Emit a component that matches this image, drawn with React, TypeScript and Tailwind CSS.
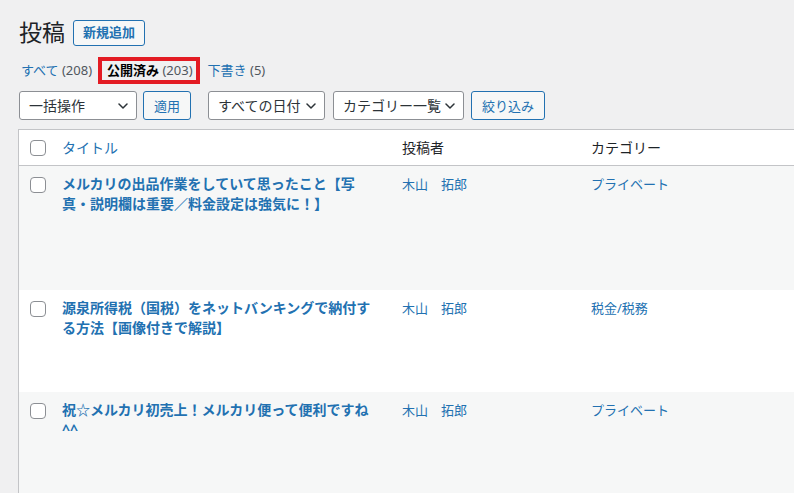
const font = "font-['Noto_Sans','Noto_Sans_CJK_JP',sans-serif]";

function Chevron() {
  return (
    <svg width="10" height="6" viewBox="0 0 10 6" fill="none" className="shrink-0">
      <path d="M1 1l4 4 4-4" stroke="#2c3338" strokeWidth="1.5" strokeLinecap="round" strokeLinejoin="round" />
    </svg>
  );
}

function Select({ label, width }: { label: string; width: string }) {
  return (
    <div
      className={`${width} h-[29px] flex items-center justify-between pl-[9px] pr-[8px] bg-white border border-[#8c8f94] rounded-[3px] text-[14px] text-[#2c3338]`}
    >
      <span className="leading-[20px]">{label}</span>
      <Chevron />
    </div>
  );
}

function Button({ label }: { label: string }) {
  return (
    <div className="h-[29px] flex items-center px-[10px] bg-[#f6f7f7] border border-[#2271b1] rounded-[3px] text-[13px] text-[#2271b1] leading-[20px]">
      {label}
    </div>
  );
}

function Checkbox() {
  return <div className="w-4 h-4 bg-white border border-[#8c8f94] rounded-[4px]" />;
}

const posts = [
  {
    title: "メルカリの出品作業をしていて思ったこと【写真・説明欄は重要／料金設定は強気に！】",
    category: "プライベート",
    height: "h-[124px]",
    bg: "bg-[#f6f7f7]",
  },
  {
    title: "源泉所得税（国税）をネットバンキングで納付する方法【画像付きで解説】",
    category: "税金/税務",
    height: "h-[102px]",
    bg: "bg-white",
  },
  {
    title: "祝☆メルカリ初売上！メルカリ便って便利ですね^^",
    category: "プライベート",
    height: "h-[120px]",
    bg: "bg-[#f6f7f7]",
  },
];

export default function App() {
  return (
    <div className={`w-[794px] h-[493px] overflow-hidden bg-[#f0f0f1] ${font} text-[#1d2327]`}>
      <div className="pl-[18px] pt-[18px]">
        {/* 見出し */}
        <div className="flex items-center gap-[8px]">
          <h1 className="text-[23px] leading-[29px] font-normal pl-[1px]">投稿</h1>
          <div className="h-[26px] flex items-center px-[9px] bg-[#f6f7f7] border border-[#2271b1] rounded-[3px] text-[13px] font-semibold text-[#2271b1]">
            新規追加
          </div>
        </div>

        {/* ステータス */}
        <div className="mt-[10px] h-[27px] flex items-center text-[13px] leading-[21px] pl-[3px]">
          <span>
            <span className="text-[#2271b1]">すべて</span>
            <span className="text-[#50575e]"> (208)</span>
          </span>
          <span className="ml-[6px] h-[27px] border-[4px] border-[#e31b23] pl-[5px] pr-[3px] flex items-center">
            <span className="font-bold text-black">公開済み</span>
            <span className="text-[#50575e]">&nbsp;(203)</span>
          </span>
          <span className="ml-[8px]">
            <span className="text-[#2271b1]">下書き</span>
            <span className="text-[#50575e]"> (5)</span>
          </span>
        </div>

        {/* 操作 */}
        <div className="mt-[7px] pl-[1px] flex items-center">
          <Select label="一括操作" width="w-[118px]" />
          <div className="ml-[6px]">
            <Button label="適用" />
          </div>
          <div className="ml-[17px]">
            <Select label="すべての日付" width="w-[117px]" />
          </div>
          <div className="ml-[8px]">
            <Select label="カテゴリー一覧" width="w-[131px]" />
          </div>
          <div className="ml-[7px]">
            <Button label="絞り込み" />
          </div>
        </div>

        {/* 一覧 */}
        <div className="mt-[9px] w-[1100px] bg-white border-l border-t border-[#c3c4c7]">
          <div className="h-[36px] flex items-center border-b border-[#c3c4c7] text-[14px] leading-[21px]">
            <div className="w-[33px] pl-[11px]">
              <Checkbox />
            </div>
            <div className="w-[340px] px-[10px] text-[#2271b1]">タイトル</div>
            <div className="w-[189px] pl-[10px]">投稿者</div>
            <div className="pl-[10px]">カテゴリー</div>
          </div>
          {posts.map((p) => (
            <div key={p.title} className={`${p.height} ${p.bg} flex items-start`}>
              <div className="w-[33px] pl-[11px] pt-[11px]">
                <Checkbox />
              </div>
              <div className="w-[340px] px-[10px] pt-[8px] text-[14px] leading-[20px] font-bold text-[#2271b1]">
                {p.title}
              </div>
              <div className="w-[189px] pl-[10px] pt-[8px] text-[13px] leading-[20px] text-[#2271b1] whitespace-pre">
                木山　拓郎
              </div>
              <div className="pl-[10px] pt-[8px] text-[13px] leading-[20px] text-[#2271b1]">{p.category}</div>
            </div>
          ))}
        </div>
      </div>
    </div>
  );
}
